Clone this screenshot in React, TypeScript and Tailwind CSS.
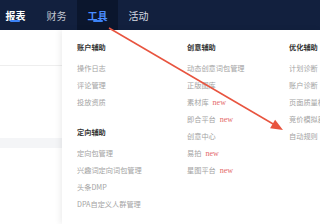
import React from "react";

const New = () => (
  <span className="ml-[4px] text-[8px] text-[#e46a6a]" style={{ fontFamily: '"Liberation Serif", serif' }}>
    new
  </span>
);

const Header = ({ children }: { children: React.ReactNode }) => (
  <div className="h-[17px] leading-[17px] mb-[4px] font-semibold text-[#333]">{children}</div>
);

const Item = ({ children, isNew }: { children: React.ReactNode; isNew?: boolean }) => (
  <div className="h-[17px] leading-[17px] text-[#a3a3a3] whitespace-nowrap">
    {children}
    {isNew && <New />}
  </div>
);

export default function App() {
  return (
    <div
      className="relative w-[320px] h-[224px] overflow-hidden bg-white"
      style={{ fontFamily: '"Noto Sans CJK SC", "Noto Sans", sans-serif' }}
    >
      <nav className="h-[30px] bg-[#12203e] flex ml-[-5px] text-[10px]">
        <div className="w-[41px] relative flex items-center justify-center text-white font-semibold">
          报表
          <span className="absolute left-[15px] top-[20px] w-[10px] h-[2px] rounded bg-[#3b82f6]" />
        </div>
        <div className="w-[41px] flex items-center justify-center text-[#c3c8d2]">财务</div>
        <div className="w-[41px] relative flex items-center justify-center bg-[#0b162d] text-[#4a8cff] font-semibold">
          工具
          <span className="absolute left-[16px] top-[20px] w-[10px] h-[2px] rounded bg-[#3b82f6]" />
        </div>
        <div className="w-[41px] flex items-center justify-center text-[#d5d9e0]">活动</div>
      </nav>

      <div className="flex flex-col">
        <div className="h-[36px] border-b border-[#eeeeee]" />
        <div className="h-[72px]" />
        <div className="h-[10px] bg-[#f4f5f7]" />
      </div>

      <div className="absolute left-[62px] top-[30px] right-0 bottom-0 bg-white shadow-[-2px_0_6px_rgba(0,0,0,0.07)] pl-[15px] pt-[9px] flex text-[7.2px]">
        <div className="w-[110px] shrink-0">
          <Header>账户辅助</Header>
          <Item>操作日志</Item>
          <Item>评论管理</Item>
          <Item>投放资质</Item>
          <div className="mt-[13px]">
            <Header>定向辅助</Header>
          </div>
          <Item>定向包管理</Item>
          <Item>兴趣词定向词包管理</Item>
          <Item>头条DMP</Item>
          <Item>DPA自定义人群管理</Item>
        </div>
        <div className="w-[102px] shrink-0">
          <Header>创意辅助</Header>
          <Item>动态创意词包管理</Item>
          <Item>正版图库</Item>
          <Item isNew>素材库</Item>
          <Item isNew>即合平台</Item>
          <Item>创意中心</Item>
          <Item isNew>易拍</Item>
          <Item isNew>星图平台</Item>
        </div>
        <div className="shrink-0">
          <Header>优化辅助</Header>
          <Item>计划诊断</Item>
          <Item>账户诊断</Item>
          <Item>页面质量检测</Item>
          <Item>竞价模拟器</Item>
          <Item>自动规则</Item>
        </div>
      </div>

      <svg className="absolute inset-0 pointer-events-none" width="320" height="224" viewBox="0 0 320 224">
        <line x1="109" y1="28" x2="274" y2="124.5" stroke="#e8543f" strokeWidth="1.5" />
        <polygon points="283,130 270.1,128.3 275.1,119.7" fill="#e8543f" />
      </svg>
    </div>
  );
}
